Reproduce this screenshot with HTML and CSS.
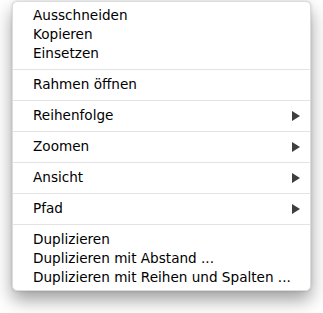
FILE: index.html
```html
<!DOCTYPE html>
<html lang="de">
<head>
    <meta charset="UTF-8">
    <meta name="viewport" content="width=device-width, initial-scale=1.0">
    <title>Kontextmenü</title>
    <!-- Styling for the page -->
    <link rel="stylesheet" href="styles.css">
</head>
<body>
    <!-- Context menu, grouped by separators -->
    <div class="menu">
        <ul class="group first">
            <li class="item">Ausschneiden</li>
            <li class="item">Kopieren</li>
            <li class="item">Einsetzen</li>
        </ul>
        <ul class="group">
            <li class="item">Rahmen öffnen</li>
        </ul>
        <ul class="group">
            <li class="item has-sub">Reihenfolge <span class="arrow"></span></li>
        </ul>
        <ul class="group">
            <li class="item has-sub">Zoomen <span class="arrow"></span></li>
        </ul>
        <ul class="group">
            <li class="item has-sub">Ansicht <span class="arrow"></span></li>
        </ul>
        <ul class="group">
            <li class="item has-sub">Pfad <span class="arrow"></span></li>
        </ul>
        <ul class="group last">
            <li class="item">Duplizieren</li>
            <li class="item">Duplizieren mit Abstand ...</li>
            <li class="item">Duplizieren mit Reihen und Spalten ...</li>
        </ul>
    </div>
</body>
</html>
```

FILE: styles.css
```css
html, body {
    margin: 0;
    height: 100%;
    background: #fff;
    font-family: "DejaVu Sans", "Noto Sans", sans-serif;
}
body {
    padding: 1px 0 0 12px;
    box-sizing: border-box;
}
.menu {
    box-sizing: border-box;
    width: 299px;
    background: #fff;
    border: 1px solid #dcdcdc;
    border-radius: 5px;
    box-shadow: 0 9px 18px rgba(0, 0, 0, 0.38), 0 0 3px rgba(0, 0, 0, 0.15);
}
.group {
    list-style: none;
    margin: 0;
    padding: 5px 0 6px;
    border-top: 1px solid #e3e3e3;
}
.group.first {
    padding-top: 4px;
    border-top: none;
}
.group.last {
    padding-bottom: 3px;
}
.item {
    display: flex;
    align-items: center;
    justify-content: space-between;
    height: 19px;
    padding: 0 10px 0 20px;
    font-size: 13.6px;
    line-height: 19px;
    color: #000;
    white-space: nowrap;
}
.arrow {
    width: 0;
    height: 0;
    border-left: 8px solid #3e3e3e;
    border-top: 5px solid transparent;
    border-bottom: 5px solid transparent;
}
```
